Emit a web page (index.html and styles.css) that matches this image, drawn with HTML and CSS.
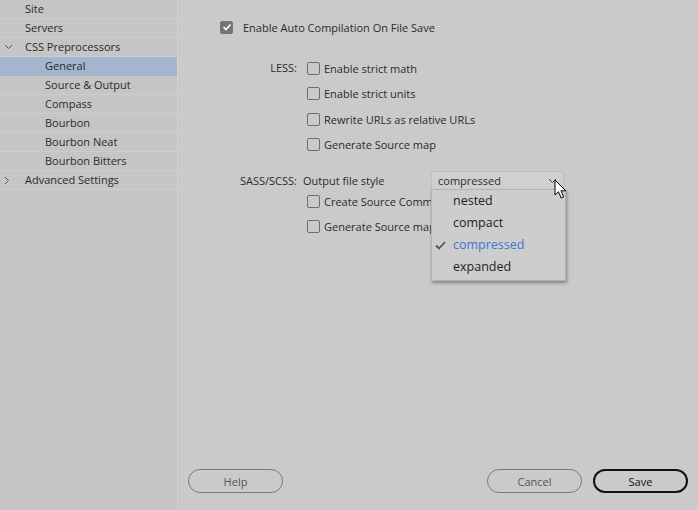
FILE: index.html
```html
<!DOCTYPE html>
<html>
<head>
<meta charset="utf-8">
<link rel="stylesheet" href="styles.css">
</head>
<body>
<div class="app">
  <aside class="sidebar">
    <div class="row lvl0">Site</div>
    <div class="row lvl0">Servers</div>
    <div class="row lvl0"><span class="tw">
      <svg width="9" height="6" viewBox="0 0 9 6"><path d="M1 1 L4.5 4.5 L8 1" fill="none" stroke="#555" stroke-width="1"/></svg></span>CSS Preprocessors</div>
    <div class="row lvl1 sel">General</div>
    <div class="row lvl1">Source &amp; Output</div>
    <div class="row lvl1">Compass</div>
    <div class="row lvl1">Bourbon</div>
    <div class="row lvl1">Bourbon Neat</div>
    <div class="row lvl1">Bourbon Bitters</div>
    <div class="row lvl0"><span class="tw">
      <svg width="6" height="9" viewBox="0 0 6 9"><path d="M1 1 L4.5 4.5 L1 8" fill="none" stroke="#555" stroke-width="1"/></svg></span>Advanced Settings</div>
  </aside>
  <main class="main">
    <div class="content">
      <label class="chk top"><span class="box on"><svg width="10" height="8" viewBox="0 0 10 8"><path d="M1.5 4 L4 6.5 L8.5 1.5" fill="none" stroke="#fff" stroke-width="1.6"/></svg></span>Enable Auto Compilation On File Save</label>

      <div class="group less">
        <div class="glabel">LESS:</div>
        <div class="opts">
          <label class="chk"><span class="box"></span>Enable strict math</label>
          <label class="chk"><span class="box"></span>Enable strict units</label>
          <label class="chk"><span class="box"></span>Rewrite URLs as relative URLs</label>
          <label class="chk"><span class="box"></span>Generate Source map</label>
        </div>
      </div>

      <div class="group sass">
        <div class="glabel">SASS/SCSS:</div>
        <div class="opts">
          <div class="selrow">
            <span class="sellabel">Output file style</span>
            <div class="select">
              <span>compressed</span>
              <svg width="9" height="6" viewBox="0 0 9 6"><path d="M1 1 L4.5 4.5 L8 1" fill="none" stroke="#444" stroke-width="1"/></svg>
              <div class="menu">
                <div class="item">nested</div>
                <div class="item">compact</div>
                <div class="item cur"><svg class="tick" width="11" height="9" viewBox="0 0 11 9"><path d="M1 4.5 L4 7.5 L10 1" fill="none" stroke="#555" stroke-width="1.8"/></svg>compressed</div>
                <div class="item">expanded</div>
              </div>
              <svg class="cursor" width="14" height="22" viewBox="0 0 14 22"><path d="M1 1 L1 16 L4.5 12.8 L7.2 19 L9.6 18 L7 11.8 L11.8 11.8 Z" fill="#fff" stroke="#000" stroke-width="1"/></svg>
            </div>
          </div>
          <label class="chk"><span class="box"></span>Create Source Comments</label>
          <label class="chk"><span class="box"></span>Generate Source map</label>
        </div>
      </div>
    </div>
    <footer class="footer">
      <button class="btn">Help</button>
      <div class="right">
        <button class="btn">Cancel</button>
        <button class="btn primary">Save</button>
      </div>
    </footer>
  </main>
</div>
</body>
</html>
```
FILE: styles.css
```css
* { box-sizing: border-box; }
html, body { margin: 0; padding: 0; }
body {
  width: 698px; height: 510px; overflow: hidden;
  font-family: "Open Sans", "Noto Sans", sans-serif;
  font-size: 11px;
  color: #2b2b2b;
  background: #cacaca;
}
.app { display: flex; height: 510px; }
.sidebar {
  width: 178px; flex: none;
  background: #c5c5c5;
  border-right: 1px solid #d4d4d4;
}
.row {
  height: 19px; line-height: 18px;
  border-bottom: 1px solid #cdcdcd;
  white-space: nowrap;
  display: flex; align-items: center;
}
.lvl0 { padding-left: 25px; position: relative; }
.lvl1 { padding-left: 45px; }
.row.sel { background: #a3b6cd; border-bottom-color: #a3b6cd; }
.tw { position: absolute; left: 4px; top: 0; height: 18px; display: flex; align-items: center; }
.main { flex: 1; display: flex; flex-direction: column; }
.content { flex: 1; padding: 19px 0 0 42px; }
.chk { display: flex; align-items: center; height: 14px; white-space: nowrap; cursor: default; }
.box {
  width: 13px; height: 13px; flex: none;
  border: 1px solid #6e6e6e; border-radius: 2px;
  background: #cacaca;
  margin-right: 4px;
  display: flex; align-items: center; justify-content: center;
}
.box.on { background: #757575; border-color: #757575; margin-right: 10px; }
.top { height: 16px; }
.group { display: flex; }
.glabel { width: 87px; text-align: right; padding-right: 10px; flex: none; }
.less { margin-top: 26px; }
.less .glabel { line-height: 14px; }
.less .opts { display: flex; flex-direction: column; gap: 11.5px; }
.sass { margin-top: 20px; }
.sass .glabel { line-height: 18px; }
.sass .opts { display: flex; flex-direction: column; gap: 11px; }
.selrow { display: flex; align-items: center; height: 18px; margin-left: -4px; margin-bottom: -6px; }
.sellabel { width: 128px; }
.select {
  position: relative;
  width: 133px; height: 19px;
  background: #d0d0d0;
  border: 1px solid #bdbdbd;
  border-radius: 2px;
  display: flex; align-items: center; justify-content: space-between;
  padding: 0 6px 0 6px;
}
.menu {
  position: absolute; left: -1px; top: 17px;
  width: 135px;
  background: #cdcdcd;
  border: 1px solid #b5b5b5;
  box-shadow: 1px 2px 3px rgba(0,0,0,0.35);
  padding: 0 0 2px 0;
  z-index: 5;
  font-size: 12.5px;
}
.item { height: 22px; line-height: 22px; padding-left: 21px; position: relative; color: #222; }
.item.cur { color: #3b78d0; }
.tick { position: absolute; left: 3px; top: 7px; }
.cursor { position: absolute; left: 122px; top: 7px; z-index: 6; }
.footer {
  height: 52px; flex: none;
  display: flex; justify-content: space-between; align-items: flex-start;
  padding: 11px 10px 0 10px;
}
.right { display: flex; gap: 11px; }
.btn {
  width: 95px; height: 24px;
  border: 1px solid #7a7a7a; border-radius: 12px;
  background: transparent;
  font-family: inherit; font-size: 11px;
  color: #555;
  padding: 0;
}
.btn.primary { border: 2px solid #111; color: #111; }
```
